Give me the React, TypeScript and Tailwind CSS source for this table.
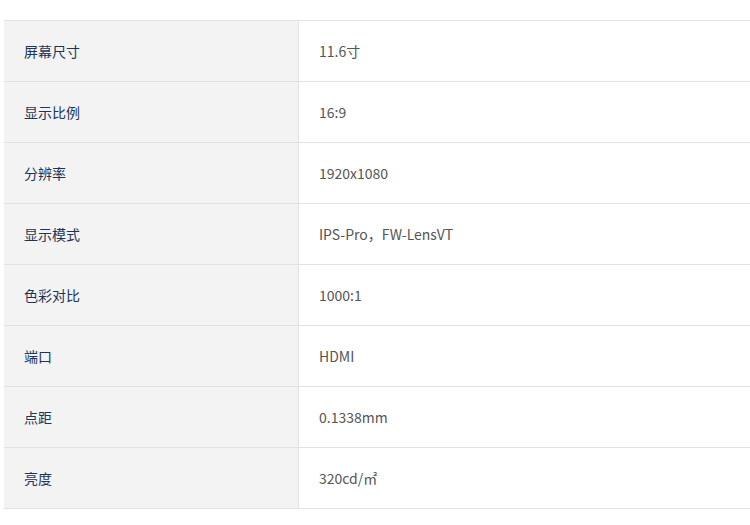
const rows: [string, string][] = [
  ['屏幕尺寸', '11.6寸'],
  ['显示比例', '16:9'],
  ['分辨率', '1920x1080'],
  ['显示模式', 'IPS-Pro，FW-LensVT'],
  ['色彩对比', '1000:1'],
  ['端口', 'HDMI'],
  ['点距', '0.1338mm'],
  ['亮度', '320cd/㎡'],
]

export default function App() {
  return (
    <div className="w-[750px] h-[525px] bg-white pt-5 pl-1 overflow-hidden" style={{ fontFamily: '"Noto Sans CJK SC", "Noto Sans", sans-serif' }}>
      <div className="border-t border-[#e2e2e2] text-sm">
        {rows.map(([label, value]) => (
          <div key={label} className="flex border-b border-[#e2e2e2]">
            <div className="w-[295px] h-[60px] shrink-0 bg-[#f3f3f3] border-r border-[#e2e2e2] flex items-center pl-5 text-[#1c3557]">
              {label}
            </div>
            <div className="flex-1 h-[60px] flex items-center pl-5 text-[#555555]">
              {value}
            </div>
          </div>
        ))}
      </div>
    </div>
  )
}
